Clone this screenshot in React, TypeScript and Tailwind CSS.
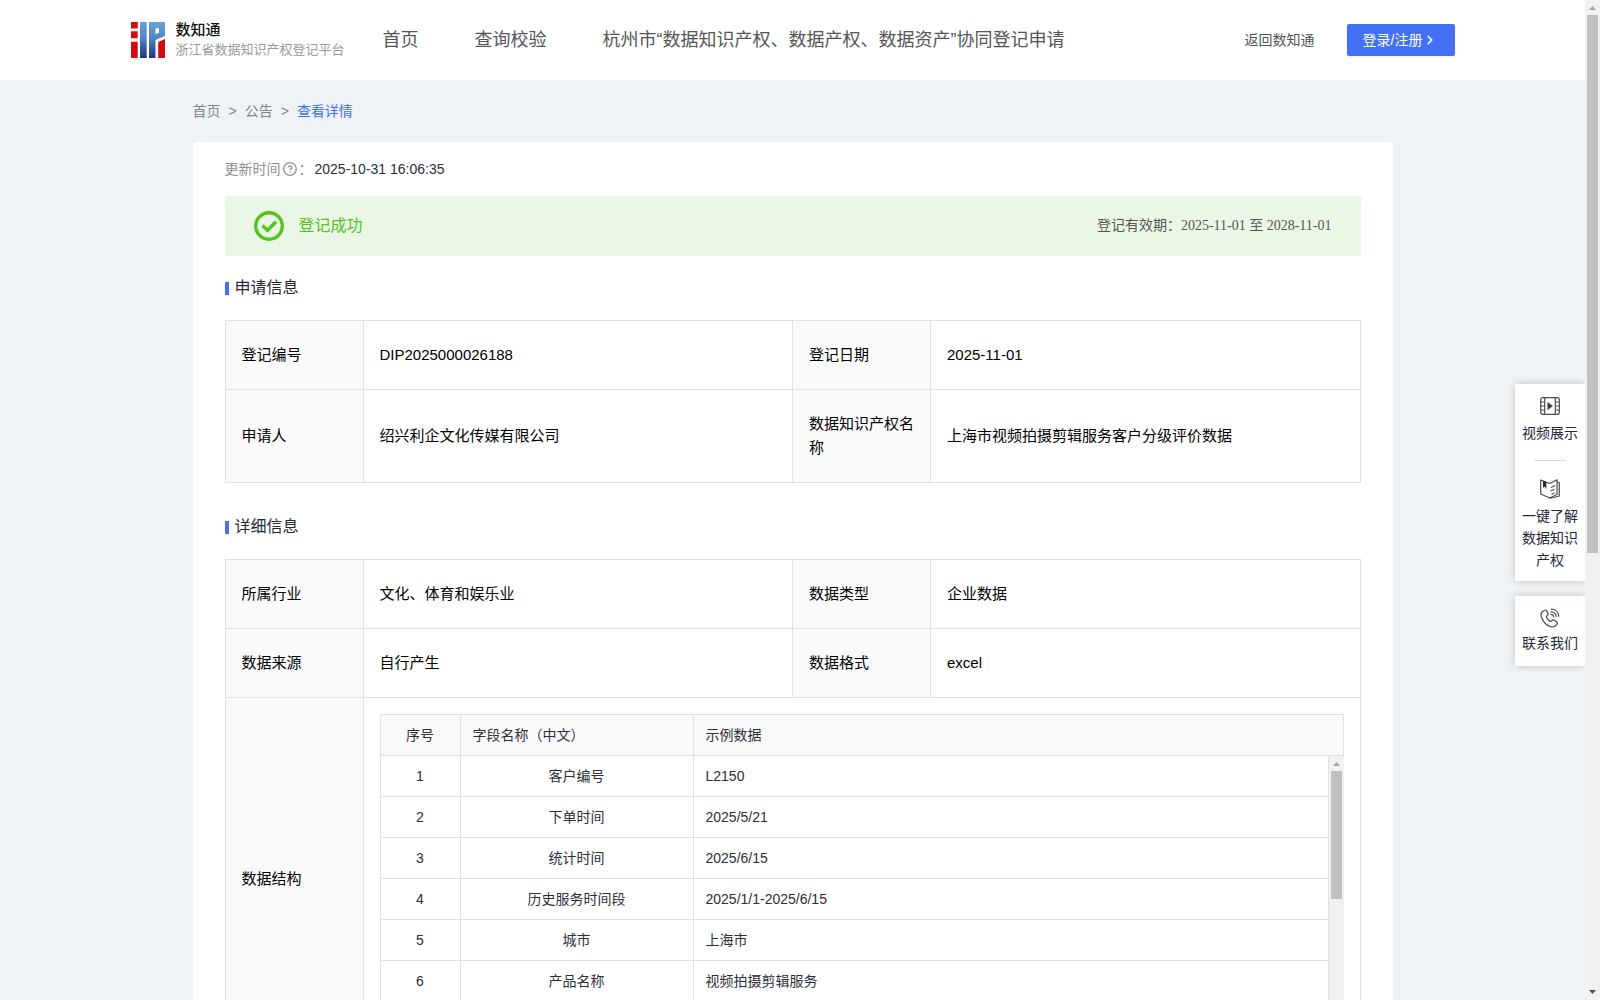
import { ChevronRight } from "lucide-react"

const navItems = [
    '首页',
    '查询校验',
    '杭州市“数据知识产权、数据产权、数据资产”协同登记申请',
]

const fields = [
    { name: '客户编号', sample: 'L2150' },
    { name: '下单时间', sample: '2025/5/21' },
    { name: '统计时间', sample: '2025/6/15' },
    { name: '历史服务时间段', sample: '2025/1/1-2025/6/15' },
    { name: '城市', sample: '上海市' },
    { name: '产品名称', sample: '视频拍摄剪辑服务' },
]

function Logo() {
    return (
        <svg width="35" height="36" viewBox="0 0 35 36" aria-hidden="true">
            <defs>
                <linearGradient id="logoBlue" x1="0" y1="0" x2="0" y2="36" gradientUnits="userSpaceOnUse">
                    <stop offset="0" stopColor="#6a9fd8" />
                    <stop offset="0.45" stopColor="#5385c4" />
                    <stop offset="1" stopColor="#1f3585" />
                </linearGradient>
            </defs>
            <path d="M0 0h6.700v6.500H0zM0 9.300h6.700v7H0zM0 19.700h6.700V36H0z" fill="#d30a10" />
            <path d="M9 0h6.700v36H9z" fill="url(#logoBlue)" />
            <path d="M18 0h16v14l-9.500 4V36H18zM24.500 6.300v6l3.500-1.500V6.300z" fill="url(#logoBlue)" fillRule="evenodd" />
            <path d="M27.200 20 34 17v19h-6.800z" fill="#d30a10" />
        </svg>
    )
}

function ScrollBar({ thumb, down }: { thumb: string; down?: boolean }) {
    return (
        <div className="w-[15px] shrink-0 bg-[#f1f1f1] flex flex-col items-center" aria-hidden="true">
            <svg className="shrink-0" width="15" height="15" viewBox="0 0 15 15">
                <path d="M4 10h7L7.500 6z" fill="#a3a3a3" />
            </svg>
            <div className={`w-[11px] bg-[#c1c1c1] ${thumb}`} />
            {down && (
                <svg className="shrink-0 mt-auto" width="15" height="15" viewBox="0 0 15 15">
                    <path d="M4 5h7L7.500 9z" fill="#505050" />
                </svg>
            )}
        </div>
    )
}

function SectionTitle({ children }: { children: string }) {
    return (
        <h2 className="flex items-center gap-1.5 text-base leading-6 text-[#24273a] mb-5">
            <span className="w-1 h-[13px] bg-[#4470f5]" />
            {children}
        </h2>
    )
}

function Label({ children }: { children: string }) {
    return <th scope="row" className="w-[138px] border border-[#e1e1e1] bg-[#fafafa] px-4 py-[22px] text-left font-normal">{children}</th>
}

function Value({ children }: { children: string }) {
    return <td className="border border-[#e1e1e1] px-4 py-[22px]">{children}</td>
}

function FieldTable() {
    const cell = 'h-[41px] border-b border-r border-[#e1e1e1] px-3'
    return (
        <div className="text-sm text-[#2b2f3a]">
            <table className="w-full table-fixed border-separate border-spacing-0 border-t border-l border-[#e1e1e1] bg-[#fafafa]">
                <thead>
                    <tr>
                        <th className={`${cell} w-20 font-normal text-center`}>序号</th>
                        <th className={`${cell} w-[233px] font-normal text-left`}>字段名称（中文）</th>
                        <th className={`${cell} font-normal text-left`}>示例数据</th>
                    </tr>
                </thead>
            </table>
            <div className="flex h-[288px] overflow-hidden">
                <div className="flex-1 border-l border-[#e1e1e1]">
                    <table className="w-full table-fixed border-separate border-spacing-0">
                        <tbody>
                            {fields.map((f, i) => (
                                <tr key={f.name}>
                                    <td className={`${cell} w-20 text-center`}>{i + 1}</td>
                                    <td className={`${cell} w-[233px] text-center`}>{f.name}</td>
                                    <td className={cell}>{f.sample}</td>
                                </tr>
                            ))}
                        </tbody>
                    </table>
                </div>
                <ScrollBar thumb="h-32" />
            </div>
        </div>
    )
}

function SideTools() {
    const item = 'w-full flex flex-col items-center text-sm leading-[22px] text-[#24273a]'
    return (
        <aside className="absolute right-0 top-96 w-[70px] flex flex-col gap-[15px]">
            <div className="bg-white shadow-[0_0_8px_rgba(0,0,0,0.2)] px-1.5 flex flex-col items-center">
                <button type="button" className={`${item} pt-3 pb-4`}>
                    {/* video */}
                    <svg width="20" height="20" viewBox="0 0 20 20" fill="none" stroke="#4a4c55" strokeWidth="1.2" className="mb-1.5">
                        <rect x="0.700" y="1.700" width="18.600" height="16.600" rx="2" />
                        <path d="M4.700 1.700v16.600M15.300 1.700v16.600M.700 6h4M.700 10h4M.700 14h4M15.300 6h4M15.300 10h4M15.300 14h4" />
                        <path d="M8 7v6l4-3z" fill="#24273a" />
                    </svg>
                    视频展示
                </button>
                <span className="w-8 h-px bg-[#dcdcdc]" />
                <button type="button" className={`${item} pt-[18px] pb-2.5`}>
                    {/* guide book */}
                    <svg width="20" height="20" viewBox="0 0 20 20" fill="none" stroke="#4a4c55" strokeWidth="1.2" strokeLinejoin="round" className="mb-1.5">
                        <path d="M.700 1v14l9 4 7.300-3.500V.800L9.700 4.500z" />
                        <path d="M17 2.800l2.300.7V17l-5.300 1.500-4.300.7" />
                        <path d="M11 8.500l4-2M10.500 12l4-1.800M11.500 15.300l3-1.300" />
                        <path d="M3 1.800v7l1.700-1.300L6.300 10V3z" fill="#24273a" stroke="none" />
                    </svg>
                    一键了解数据知识产权
                </button>
            </div>
            <button type="button" className={`${item} bg-white shadow-[0_0_8px_rgba(0,0,0,0.2)] pt-3 pb-3`}>
                <svg width="20" height="20" viewBox="0 0 20 20" fill="none" stroke="#4a4c55" strokeWidth="1.2" strokeLinecap="round" strokeLinejoin="round" className="mb-1">
                    <path d="M4 2.500C1.500 4 .300 6.500 1.600 9.500c1.500 4 4.500 7.500 8.400 9 2.500 1 5 .2 6.700-1.800 1-1.200.9-2-.2-2.900l-2-1.400c-1-.7-1.800-.5-2.500.3-.8 1-1.500 1-2.400.3-1.300-1-2.300-2.200-3-3.600-.5-.9-.2-1.500.6-2 1-.7 1.200-1.300.7-2.300L6.700 2.900C6.100 1.800 5.200 1.700 4 2.500z" />
                    <path d="M11.500 1.200c4 .2 7 3 7.300 7M11 3.800c3 .1 5 2 5.200 4.700M11 6.300c1.600.1 2.500 1 2.600 2.500" />
                </svg>
                联系我们
            </button>
        </aside>
    )
}

export default function App() {
    return (
        <div className="flex h-screen font-['Liberation_Sans','Noto_Sans_CJK_SC',sans-serif]">
            <div className="relative flex-1 min-w-0 overflow-hidden bg-[#eef3f6]">
                <header className="bg-white">
                    <div className="max-w-[1324px] h-20 mx-auto flex items-center">
                        <a href="#" className="flex items-center gap-2.5">
                            <Logo />
                            <span className="flex flex-col text-[13px] leading-5 text-[#999] whitespace-nowrap">
                                <strong className="text-[15px] leading-5 font-medium text-[#111]">数知通</strong>
                                浙江省数据知识产权登记平台
                            </span>
                        </a>
                        <nav className="ml-[38px] flex gap-14 text-lg text-[#555] whitespace-nowrap">
                            {navItems.map(n => <a key={n} href="#">{n}</a>)}
                        </nav>
                        <a href="#" className="ml-auto mr-8 text-sm text-[#555] whitespace-nowrap">返回数知通</a>
                        <button type="button" className="w-[108px] h-8 pl-4 flex items-center gap-px bg-[#4470f5] text-white text-sm rounded-xs shadow-[0_2px_0_rgba(0,0,0,0.045)] whitespace-nowrap">
                            登录/注册
                            <ChevronRight className="w-3.5 h-3.5" strokeWidth={3} />
                        </button>
                    </div>
                </header>

                <main className="max-w-[1200px] mx-auto">
                    <nav className="py-5 flex gap-2 text-sm leading-[22px] text-[#868686]">
                        <a href="#">首页</a>
                        <span>&gt;</span>
                        <a href="#">公告</a>
                        <span>&gt;</span>
                        <a href="#" className="text-[#4470f5]">查看详情</a>
                    </nav>

                    <div className="bg-white rounded-sm px-8 py-4">
                        <div className="flex items-center text-sm leading-[22px] text-[#909094]">
                            更新时间
                            <svg width="14" height="14" viewBox="0 0 14 14" fill="none" stroke="#909094" strokeWidth="1.3" className="mx-0.5">
                                <circle cx="7" cy="7" r="6.300" />
                                <path d="M5.200 5.600c0-1 .8-1.700 1.800-1.700s1.800.7 1.800 1.600c0 1.200-1.800 1.300-1.800 2.600M7 9.300v1.200" />
                            </svg>
                            ：
                            <span className="ml-0.5 text-[#2b2f3a]">2025-10-31 16:06:35</span>
                        </div>

                        {/* Status */}
                        <div className="mt-4 mb-5 h-15 px-[29px] bg-[#ebf7e6] flex items-center justify-between">
                            <div className="flex items-center gap-[15px] text-base text-[#52c41a]">
                                <svg width="30" height="30" viewBox="0 0 30 30" fill="none" stroke="#52c41a">
                                    <circle cx="15" cy="15" r="13.300" strokeWidth="3.400" />
                                    <path d="M8.500 14.500l5 4.800 8.500-8.500" strokeWidth="3.600" />
                                </svg>
                                登记成功
                            </div>
                            <div className="text-sm text-[#555] font-['Liberation_Serif','Noto_Sans_CJK_SC',serif]">登记有效期：2025-11-01 至 2028-11-01</div>
                        </div>

                        <SectionTitle>申请信息</SectionTitle>
                        <table className="w-full table-fixed border-collapse text-[15px] leading-6 text-black mb-8">
                            <tbody>
                                <tr>
                                    <Label>登记编号</Label>
                                    <Value>DIP2025000026188</Value>
                                    <Label>登记日期</Label>
                                    <Value>2025-11-01</Value>
                                </tr>
                                <tr>
                                    <Label>申请人</Label>
                                    <Value>绍兴利企文化传媒有限公司</Value>
                                    <Label>数据知识产权名称</Label>
                                    <Value>上海市视频拍摄剪辑服务客户分级评价数据</Value>
                                </tr>
                            </tbody>
                        </table>

                        <SectionTitle>详细信息</SectionTitle>
                        <table className="w-full table-fixed border-collapse text-[15px] leading-6 text-black">
                            <tbody>
                                <tr>
                                    <Label>所属行业</Label>
                                    <Value>文化、体育和娱乐业</Value>
                                    <Label>数据类型</Label>
                                    <Value>企业数据</Value>
                                </tr>
                                <tr>
                                    <Label>数据来源</Label>
                                    <Value>自行产生</Value>
                                    <Label>数据格式</Label>
                                    <Value>excel</Value>
                                </tr>
                                <tr>
                                    <Label>数据结构</Label>
                                    <td colSpan={3} className="border border-[#e1e1e1] p-4">
                                        <FieldTable />
                                    </td>
                                </tr>
                            </tbody>
                        </table>
                    </div>
                </main>

                <SideTools />
            </div>
            <ScrollBar thumb="h-[calc(54%-2px)]" down />
        </div>
    )
}
